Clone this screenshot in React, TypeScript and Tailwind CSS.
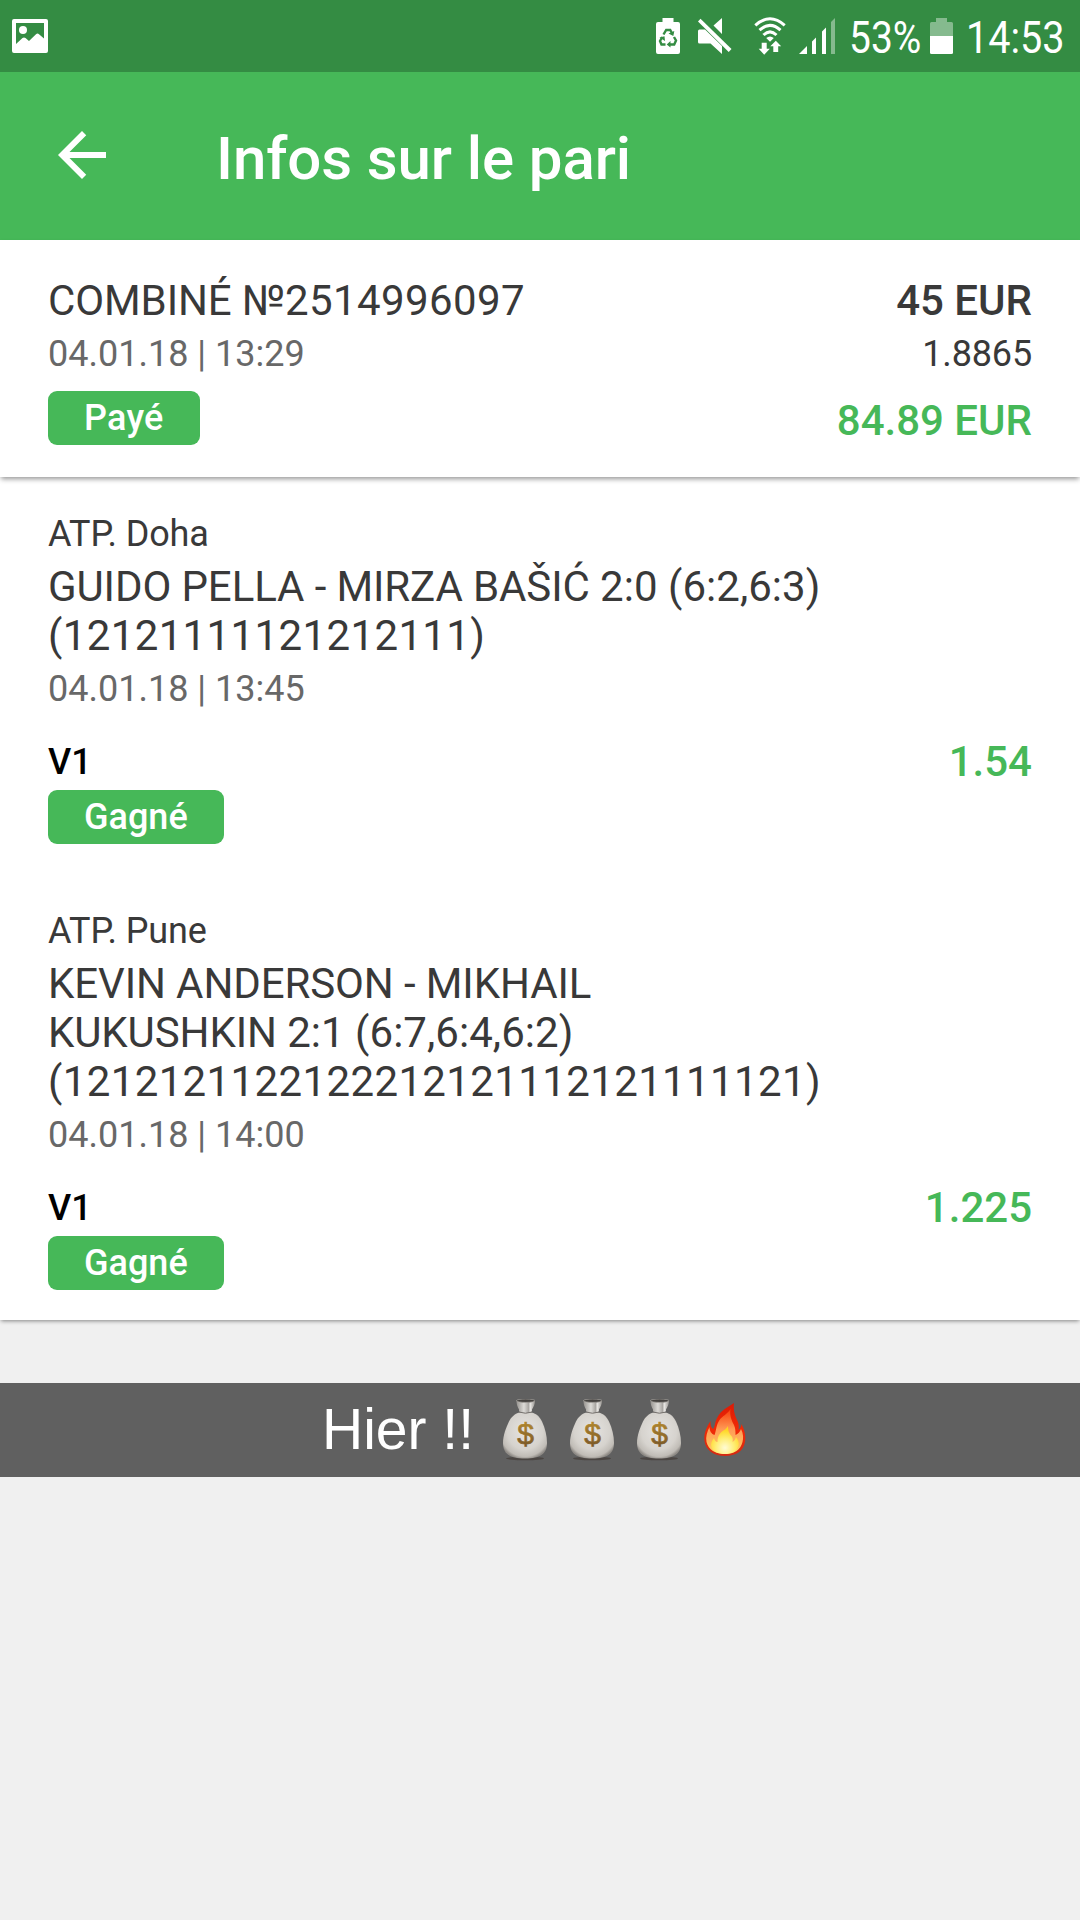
const bets = [
  {
    league: "ATP. Doha",
    lines: [
      { names: "GUIDO PELLA - MIRZA BAŠIĆ ", score: "2:0 (6:2,6:3)" },
      { points: "(12121111121212111)" },
    ],
    date: "04.01.18 | 13:45",
    pick: "V1",
    odds: "1.54",
    status: "Gagné",
  },
  {
    league: "ATP. Pune",
    lines: [
      { names: "KEVIN ANDERSON - MIKHAIL" },
      { names: "KUKUSHKIN ", score: "2:1 (6:7,6:4,6:2)" },
      { points: "(1212121122122212121112121111121)" },
    ],
    date: "04.01.18 | 14:00",
    pick: "V1",
    odds: "1.225",
    status: "Gagné",
  },
];

export default function App() {
  return (
    <div className="flex h-[1920px] w-[1080px] flex-col overflow-hidden bg-[#f0f0f0] font-[Roboto,sans-serif] text-[#393939]">
      <StatusBar />
      <AppBar />
      <Summary />
      <main className="flex h-[843px] flex-col gap-[66px] bg-white px-12 pt-9 shadow-[0_2px_4px_-1px_rgba(0,0,0,0.45)]">
        {bets.map((bet) => (
          <BetItem key={bet.league} bet={bet} />
        ))}
      </main>
      <Caption />
    </div>
  );
}

function StatusBar() {
  return (
    <div className="flex h-[72px] shrink-0 items-center justify-between bg-[#348c43] pl-3 pr-4 text-white">
      <PictureIcon />
      <div className="flex items-center">
        <BatterySaverIcon />
        <MuteIcon />
        <WifiIcon />
        <SignalIcon />
        <span className="ml-3.5 mt-[3px] w-[73px] origin-left scale-x-[0.885] whitespace-nowrap text-[44px] leading-[52px]">
          53%
        </span>
        <BatteryIcon />
        <span className="ml-[13px] mt-[3px] w-[98px] origin-left scale-x-[0.9] whitespace-nowrap text-[44px] leading-[52px]">
          14:53
        </span>
      </div>
    </div>
  );
}

function AppBar() {
  return (
    <header className="flex h-[168px] shrink-0 items-center bg-[#46b858] pl-[46px] text-white">
      <svg viewBox="0 0 24 24" className="size-[72px] -translate-y-px" fill="currentColor">
        <path d="M20 11H7.83l5.59-5.59L12 4l-8 8 8 8 1.41-1.41L7.83 13H20v-2z" />
      </svg>
      <h1 className="ml-[98px] mt-1.5 text-[60px] font-medium leading-[70px] tracking-[-0.1px]">
        Infos sur le pari
      </h1>
    </header>
  );
}

function Summary() {
  return (
    <section className="relative z-10 flex h-[237px] shrink-0 justify-between bg-white px-12 pt-9 shadow-[0_3px_5px_-1px_rgba(0,0,0,0.42)]">
      <div className="flex flex-col items-start">
        <p className="text-[42px] leading-[49px]">
          <span className="tracking-[-0.1px]">COMBINÉ №</span>
          <span className="tracking-[0.4px]">2514996097</span>
        </p>
        <p className="mt-2 text-4xl leading-[42px] text-[#686868]">04.01.18 | 13:29</p>
        <Badge className="mt-4 tracking-[0.25px]">Payé</Badge>
      </div>
      <div className="flex flex-col items-end">
        <p className="text-[42px] font-medium leading-[49px]">45 EUR</p>
        <p className="mt-2 text-4xl leading-[42px] tracking-[-0.15px]">1.8865</p>
        <p className="mt-[21px] text-[42px] font-medium leading-[49px] text-[#46b858]">
          84.89 EUR
        </p>
      </div>
    </section>
  );
}

function Badge({ children, className }: { children: string; className?: string }) {
  return (
    <span
      className={`rounded-[9px] bg-[#46b858] px-9 py-1.5 text-4xl font-medium leading-[42px] text-white ${className ?? ""}`}
    >
      {children}
    </span>
  );
}

type Line = { names?: string; score?: string; points?: string };
type Bet = Omit<(typeof bets)[number], "lines"> & { lines: Line[] };

function BetItem({ bet }: { bet: Bet }) {
  return (
    <article className="flex flex-col items-start">
      <p className="text-4xl leading-[42px] tracking-[-0.1px]">{bet.league}</p>
      <div className="mt-[7px] whitespace-pre text-[42px] leading-[49px]">
        {bet.lines.map((line, idx) => (
          <p key={idx}>
            {line.names && <span className="tracking-[-0.11px]">{line.names}</span>}
            {line.score && <span className="tracking-[0.04px]">{line.score}</span>}
            {line.points && <span className="tracking-[0.37px]">{line.points}</span>}
          </p>
        ))}
      </div>
      <p className="mt-2 text-4xl leading-[42px] text-[#686868]">{bet.date}</p>
      <div className="mt-[27px] flex h-[53px] w-full items-start justify-between">
        <span className="mt-1 text-4xl font-medium leading-[42px] text-black">{bet.pick}</span>
        <span className="text-[42px] font-medium leading-[49px] text-[#46b858]">{bet.odds}</span>
      </div>
      <Badge>{bet.status}</Badge>
    </article>
  );
}

function Caption() {
  return (
    <div className="mt-[63px] flex h-[94px] shrink-0 items-center bg-[#606060] pl-[322px] text-white">
      <span className="-mt-0.5 w-[181px] whitespace-pre font-['Liberation_Sans',sans-serif] text-[57px] leading-[66px]">
        Hier !!
      </span>
      <div className="flex items-center gap-[23px]">
        <MoneyBag />
        <MoneyBag />
        <MoneyBag />
        <Flame />
      </div>
    </div>
  );
}

function PictureIcon() {
  return (
    <svg viewBox="0 0 36 34" className="h-[34px] w-9" fill="currentColor">
      <path
        fillRule="evenodd"
        d="M2 0h32a2 2 0 0 1 2 2v30a2 2 0 0 1-2 2H2a2 2 0 0 1-2-2V2a2 2 0 0 1 2-2zm2 4v21l6.500-6q1.500-1.200 3 0l3.500 3 7-6.800q1.500-1.500 3 0l5 4.300V4z"
      />
      <circle cx="11" cy="11" r="4" />
    </svg>
  );
}

function BatterySaverIcon() {
  return (
    <svg viewBox="0 0 24 36" className="h-9 w-6">
      <path
        fill="currentColor"
        d="M6.500 0h11v4H22a2 2 0 0 1 2 2v28a2 2 0 0 1-2 2H2a2 2 0 0 1-2-2V6a2 2 0 0 1 2-2h4.500z"
      />
      <path
        fill="none"
        stroke="#348c43"
        strokeWidth="2.400"
        d="M7.500 16.500 10.200 12h4l2.300 4M18 19l2 3.500-1.800 4H13M9.500 26.500H5.500L4 23l2.300-4"
      />
      <path
        fill="#348c43"
        d="m18.300 13-1 5-4.800-2.500zM14.500 23v6.500L10.700 26.500zM3.500 19.500l5-1.200.5 4.700z"
      />
    </svg>
  );
}

function MuteIcon() {
  return (
    <svg viewBox="0 0 34 36" className="ml-[18px] h-9 w-[34px]" fill="currentColor">
      <path d="M24 0v16l-8.500-8.500zM1.500 11.500H7L24 28v8L12.500 25.500h-11Q0 25.500 0 24V13q0-1.500 1.500-1.500z" />
      <path d="M2.500.8 33.500 31l-2.800 3L0 3.500z" />
    </svg>
  );
}

function WifiIcon() {
  return (
    <svg viewBox="0 0 34 38" className="ml-[22px] h-[38px] w-[34px]">
      <g fill="none" stroke="currentColor" strokeWidth="3">
        <path d="M1.300 8.300Q16-4.800 30.700 8.300" />
        <path d="M5.500 13.200Q16 3.500 26.500 13.200" />
        <path d="M9.500 18Q16 11.800 22.500 18" />
      </g>
      <path
        fill="currentColor"
        d="M12.200 21q3.800-3.200 7.600 0L16 24.800zM7.700 25.700h5v6h3.100l-5.600 6-5.500-6h3zM19.300 35v-5.700h-3l5.500-5.600 5.400 5.600h-3V35z"
      />
    </svg>
  );
}

function SignalIcon() {
  return (
    <svg viewBox="0 0 36 36" className="ml-[11px] size-9" fill="currentColor">
      <path d="M0 36l8-8v8zM13 23.500l4-4V36h-4zM23 13.500l4-4V36h-4z" />
      <path d="M32 4l4-4v36h-4z" opacity="0.4" />
    </svg>
  );
}

function BatteryIcon() {
  return (
    <svg viewBox="0 0 23 36" className="ml-2 h-9 w-[23px]" fill="currentColor">
      <path opacity="0.4" d="M6 0h11v4h4.500Q23 4 23 5.500V18H0V5.500Q0 4 1.500 4H6z" />
      <path d="M0 18h23v16.500q0 1.500-1.500 1.500h-20Q0 36 0 34.500z" />
    </svg>
  );
}

function MoneyBag() {
  return (
    <svg viewBox="0 0 44 62" className="h-[62px] w-11">
      <defs>
        <radialGradient id="bag" cx="0.5" cy="0.4" r="0.62">
          <stop offset="0" stopColor="#e6e4e1" />
          <stop offset="0.65" stopColor="#d6d3ce" />
          <stop offset="0.9" stopColor="#c0bcb6" />
          <stop offset="1" stopColor="#8f8b86" />
        </radialGradient>
        <linearGradient id="neck" x1="0" x2="1">
          <stop offset="0" stopColor="#96938f" />
          <stop offset="0.4" stopColor="#dddbd7" />
          <stop offset="0.65" stopColor="#aaa7a3" />
          <stop offset="0.75" stopColor="#e8e6e3" />
          <stop offset="1" stopColor="#96938f" />
        </linearGradient>
        <linearGradient id="gold" x1="0" y1="0" x2="0" y2="1">
          <stop offset="0" stopColor="#bd9130" />
          <stop offset="1" stopColor="#705026" />
        </linearGradient>
      </defs>
      <ellipse cx="22" cy="59.500" rx="19" ry="1.700" fill="#4b4643" />
      <path
        fill="url(#bag)"
        d="M16.500 13.500h12c5 1 8 4 10.500 9C42 29 44 37 44 44c0 10-6 15.500-22 15.500S0 54 0 44c0-8 3-15 6-21.500 2-4 5.500-8 10.500-9z"
      />
      <path fill="url(#neck)" d="M13.500 1.500q9.500 3 18.500 0c0 4-1.500 6-3 9v2q-6.500 3-13 0v-2c-1.500-3-2.500-5-2.500-9z" />
      <ellipse cx="22.700" cy="1.700" rx="9.300" ry="1.700" fill="#44413e" stroke="#b8b5b0" strokeWidth="0.600" />
      <path d="M16 13q6.500 2.500 13 0" fill="none" stroke="#77736f" strokeWidth="1" />
      <text
        x="22.500"
        y="45"
        textAnchor="middle"
        fill="url(#gold)"
        stroke="url(#gold)"
        strokeWidth="0.700"
        className="font-['Liberation_Sans',sans-serif] text-[30px]"
      >
        $
      </text>
    </svg>
  );
}

function Flame() {
  return (
    <svg viewBox="0 0 42 54" className="h-[54px] w-[42px]">
      <defs>
        <linearGradient id="outer" x1="0" y1="0" x2="0" y2="1">
          <stop offset="0" stopColor="#dc1a05" />
          <stop offset="0.5" stopColor="#f02a06" />
          <stop offset="1" stopColor="#d32a12" />
        </linearGradient>
        <linearGradient id="middle" x1="0" y1="0" x2="0" y2="1">
          <stop offset="0" stopColor="#f63c0a" />
          <stop offset="0.45" stopColor="#ff9a55" />
          <stop offset="0.8" stopColor="#ffbd5e" />
          <stop offset="1" stopColor="#ffdc6a" />
        </linearGradient>
        <radialGradient id="inner" cx="0.5" cy="0.78" r="0.65">
          <stop offset="0" stopColor="#fffbd5" />
          <stop offset="0.5" stopColor="#ffee79" />
          <stop offset="1" stopColor="#ffd51e" />
        </radialGradient>
      </defs>
      <path
        fill="url(#outer)"
        d="M30 0c-1 8 1 13 3.500 18 1.500 3 1.500 6 1 9 1.800-1.500 2.800-4 3-6 3 6 4.500 12 3.500 18C39.500 48 32 53 21 53S1.500 47 .5 38C-.5 31 2.500 24 6.500 18c-.2 4 .5 6 2.500 8 2-2 1.500-6 4-11C17 7 24 4 30 0z"
      />
      <path
        fill="url(#middle)"
        d="M26.500 6c-1 7 1 11 3.500 16 1.500 3 1.500 7 1.500 10 2.500-1 4.500-3 5.500-6 2.500 5 2.500 9 1.500 13-2 8-8 12-17.500 12S4.500 47 2.500 39C1.500 34 3 29 5.500 24c0 4 2 7 5 8 2-5 1.500-10 5-15 3-4 8-6 11-11z"
      />
      <path
        fill="url(#inner)"
        d="M24 23c0 5 1 7 3.500 10 1.500 2 1.500 4 1 6 2-1 3-3 3.500-5 3 4 3.500 7 2 10-2 5-7 7-13 7S9 49 7.500 44c-1-3 0-6 2.500-9 .5 2 1.500 4 3.500 4 0-4 .5-6 3-9 2.500-3 5.500-3 7.500-7z"
      />
    </svg>
  );
}
